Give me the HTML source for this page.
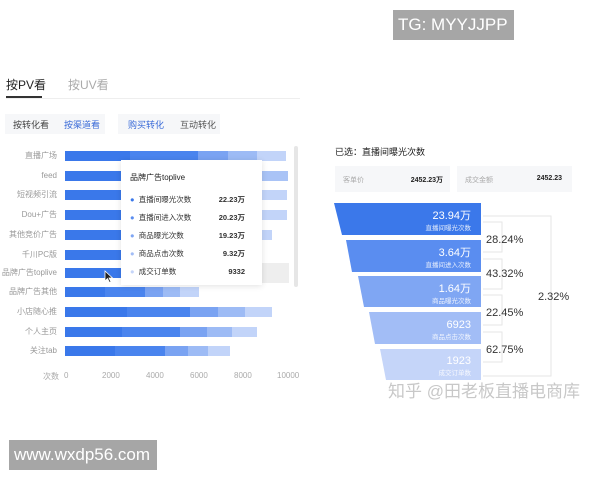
<!DOCTYPE html>
<html><head><meta charset="utf-8"><style>
body{margin:0;width:600px;height:480px;background:#fff;position:relative;overflow:hidden;font-family:"Liberation Sans","Noto Sans CJK SC",sans-serif;}
.a{position:absolute;white-space:nowrap}
.lbl{position:absolute;right:543px;font-size:8px;color:#999;line-height:10px}
.bar{position:absolute;left:65px;height:10px;display:flex}
.bar i{display:block;height:10px}
.ax{position:absolute;top:371px;font-size:8px;color:#aaa}
</style></head><body>
<div class="a" style="left:393px;top:10px;width:121px;height:30px;background:#a6a6a6;color:#fff;font-size:17px;line-height:30px;padding-left:5px;box-sizing:border-box">TG: MYYJJPP</div>

<div class="a" style="left:6px;top:76px;font-size:12px;color:#222">按PV看</div>
<div class="a" style="left:68px;top:76px;font-size:12px;color:#aaa">按UV看</div>
<div class="a" style="left:6px;top:96px;width:36px;height:2px;background:#333"></div>
<div class="a" style="left:6px;top:98px;width:294px;height:1px;background:#eee"></div>

<div class="a" style="left:5px;top:114px;width:100px;height:20px;background:#f6f7f9"></div>
<div class="a" style="left:118px;top:114px;width:102px;height:20px;background:#f6f7f9"></div>
<div class="a" style="left:13px;top:118px;font-size:9px;color:#444">按转化看</div>
<div class="a" style="left:64px;top:118px;font-size:9px;color:#3a6bd8">按渠道看</div>
<div class="a" style="left:128px;top:118px;font-size:9px;color:#3a6bd8">购买转化</div>
<div class="a" style="left:180px;top:118px;font-size:9px;color:#555">互动转化</div>

<div class="lbl" style="top:151px">直播广场</div>
<div class="lbl" style="top:171px">feed</div>
<div class="lbl" style="top:190px">短视频引流</div>
<div class="lbl" style="top:210px">Dou+广告</div>
<div class="lbl" style="top:230px">其他竞价广告</div>
<div class="lbl" style="top:250px">千川PC版</div>
<div class="lbl" style="top:268px">品牌广告toplive</div>
<div class="lbl" style="top:287px">品牌广告其他</div>
<div class="lbl" style="top:307px">小店随心推</div>
<div class="lbl" style="top:327px">个人主页</div>
<div class="lbl" style="top:346px">关注tab</div>

<div class="bar" style="top:151px"><i style="width:65px;background:#3a78ea"></i><i style="width:68px;background:#4a84ee"></i><i style="width:30px;background:#7aa3f2"></i><i style="width:29px;background:#9dbbf5"></i><i style="width:29px;background:#c2d4f9"></i></div>
<div class="bar" style="top:171px"><i style="width:56px;background:#3a78ea"></i></div>
<div class="bar" style="top:190px"><i style="width:56px;background:#3a78ea"></i></div>
<div class="bar" style="top:210px"><i style="width:56px;background:#3a78ea"></i></div>
<div class="bar" style="top:230px"><i style="width:56px;background:#3a78ea"></i></div>
<div class="bar" style="top:250px"><i style="width:56px;background:#3a78ea"></i></div>
<div class="bar" style="top:268px"><i style="width:56px;background:#3a78ea"></i></div>
<div class="a" style="left:262px;top:171px;width:26px;height:10px;background:#a9c3f6"></div>
<div class="a" style="left:262px;top:190px;width:25px;height:10px;background:#c2d4f9"></div>
<div class="a" style="left:262px;top:210px;width:25px;height:10px;background:#c2d4f9"></div>
<div class="a" style="left:262px;top:230px;width:10px;height:10px;background:#c2d4f9"></div>
<div class="a" style="left:262px;top:263px;width:27px;height:20px;background:#eee"></div>
<div class="bar" style="top:287px"><i style="width:40px;background:#3a78ea"></i><i style="width:40px;background:#4a84ee"></i><i style="width:18px;background:#7aa3f2"></i><i style="width:17px;background:#9dbbf5"></i><i style="width:19px;background:#c2d4f9"></i></div>
<div class="bar" style="top:307px"><i style="width:62px;background:#3a78ea"></i><i style="width:63px;background:#4a84ee"></i><i style="width:28px;background:#7aa3f2"></i><i style="width:27px;background:#9dbbf5"></i><i style="width:27px;background:#c2d4f9"></i></div>
<div class="bar" style="top:327px"><i style="width:57px;background:#3a78ea"></i><i style="width:58px;background:#4a84ee"></i><i style="width:27px;background:#7aa3f2"></i><i style="width:25px;background:#9dbbf5"></i><i style="width:25px;background:#c2d4f9"></i></div>
<div class="bar" style="top:346px"><i style="width:50px;background:#3a78ea"></i><i style="width:50px;background:#4a84ee"></i><i style="width:23px;background:#7aa3f2"></i><i style="width:20px;background:#9dbbf5"></i><i style="width:22px;background:#c2d4f9"></i></div>
<div class="a" style="left:294px;top:146px;width:4px;height:141px;background:#e6e6e6;border-radius:2px"></div>

<div class="a" style="left:121px;top:160px;width:141px;height:125px;background:#fff;box-shadow:0 1px 6px rgba(0,0,0,.12)"></div>
<div class="a" style="left:130px;top:172px;font-size:8px;color:#222">品牌广告toplive</div>
<div class="a" style="left:130px;top:191px;width:115px;font-size:7.5px;color:#333;line-height:18px">
<div><span style="color:#3a78ea">●</span>&nbsp; 直播间曝光次数<b style="float:right">22.23万</b></div>
<div><span style="color:#5a8df0">●</span>&nbsp; 直播间进入次数<b style="float:right">20.23万</b></div>
<div><span style="color:#7fa6f3">●</span>&nbsp; 商品曝光次数<b style="float:right">19.23万</b></div>
<div><span style="color:#a2bdf6">●</span>&nbsp; 商品点击次数<b style="float:right">9.32万</b></div>
<div><span style="color:#c5d5f9">●</span>&nbsp; 成交订单数<b style="float:right">9332</b></div>
</div>
<svg class="a" style="left:104px;top:270px" width="10" height="14"><path d="M1 1 L1 11 L3.5 8.5 L5.5 12.5 L7 11.8 L5 8 L8.5 8 Z" fill="#222" stroke="#fff" stroke-width=".8"/></svg>

<div class="ax" style="left:43px">次数</div>
<div class="ax" style="left:64px">0</div>
<div class="ax" style="left:102px">2000</div>
<div class="ax" style="left:146px">4000</div>
<div class="ax" style="left:190px">6000</div>
<div class="ax" style="left:234px">8000</div>
<div class="ax" style="left:277px">10000</div>

<div class="a" style="left:335px;top:145px;font-size:9px;color:#222">已选：直播间曝光次数</div>
<div class="a" style="left:335px;top:166px;width:115px;height:26px;background:#f6f7f9"></div>
<div class="a" style="left:457px;top:166px;width:115px;height:26px;background:#f6f7f9"></div>
<div class="a" style="left:343px;top:175px;font-size:7px;color:#aaa">客单价</div>
<div class="a" style="left:400px;top:175px;width:43px;text-align:right;font-size:7px;color:#222;font-weight:bold">2452.23万</div>
<div class="a" style="left:465px;top:175px;font-size:7px;color:#aaa">成交金额</div>
<div class="a" style="left:520px;top:175px;width:42px;text-align:right;font-size:7px;color:#222;font-weight:bold">2452.23</div>

<svg class="a" style="left:0;top:0" width="600" height="480">
<path d="M334 203 H481 V235 H342 Z" fill="#3b78ea"/>
<path d="M346 240 H481 V272 H352 Z" fill="#5a8df0"/>
<path d="M358 276 H481 V307 H364 Z" fill="#7fa6f3"/>
<path d="M369 312 H481 V344 H375 Z" fill="#a2bdf6"/>
<path d="M380 349 H481 V380 H386 Z" fill="#c5d5f9"/>
<g fill="none" stroke="#e6e6e6" stroke-width="1">
<path d="M483 222 H502 V252 H483"/><path d="M483 259 H502 V289 H483"/><path d="M483 295 H502 V325 H483"/><path d="M483 332 H502 V362 H483"/>
<path d="M483 216 H551 V376 H483"/>
</g>
<g fill="#fff" text-anchor="end" font-family="Liberation Sans,Noto Sans CJK SC,sans-serif">
<text x="471" y="219" font-size="11">23.94万</text><text x="471" y="230" font-size="6.5" opacity=".85">直播间曝光次数</text>
<text x="471" y="256" font-size="11">3.64万</text><text x="471" y="267" font-size="6.5" opacity=".85">直播间进入次数</text>
<text x="471" y="292" font-size="11">1.64万</text><text x="471" y="303" font-size="6.5" opacity=".85">商品曝光次数</text>
<text x="471" y="328" font-size="11">6923</text><text x="471" y="339" font-size="6.5" opacity=".85">商品点击次数</text>
<text x="471" y="364" font-size="11">1923</text><text x="471" y="375" font-size="6.5" opacity=".85">成交订单数</text>
</g>
<g fill="#333" font-size="11" font-family="Liberation Sans,sans-serif">
<text x="486" y="243">28.24%</text><text x="486" y="277">43.32%</text><text x="486" y="316">22.45%</text><text x="486" y="353">62.75%</text><text x="538" y="300">2.32%</text>
</g>
</svg>
<div class="a" style="left:388px;top:377px;font-size:17px;color:#c8c8c8">知乎 @田老板直播电商库</div>

<div class="a" style="left:9px;top:440px;width:148px;height:30px;background:#a6a6a6;color:#fff;font-size:17px;line-height:30px;padding-left:5px;box-sizing:border-box">www.wxdp56.com</div>
</body></html>
